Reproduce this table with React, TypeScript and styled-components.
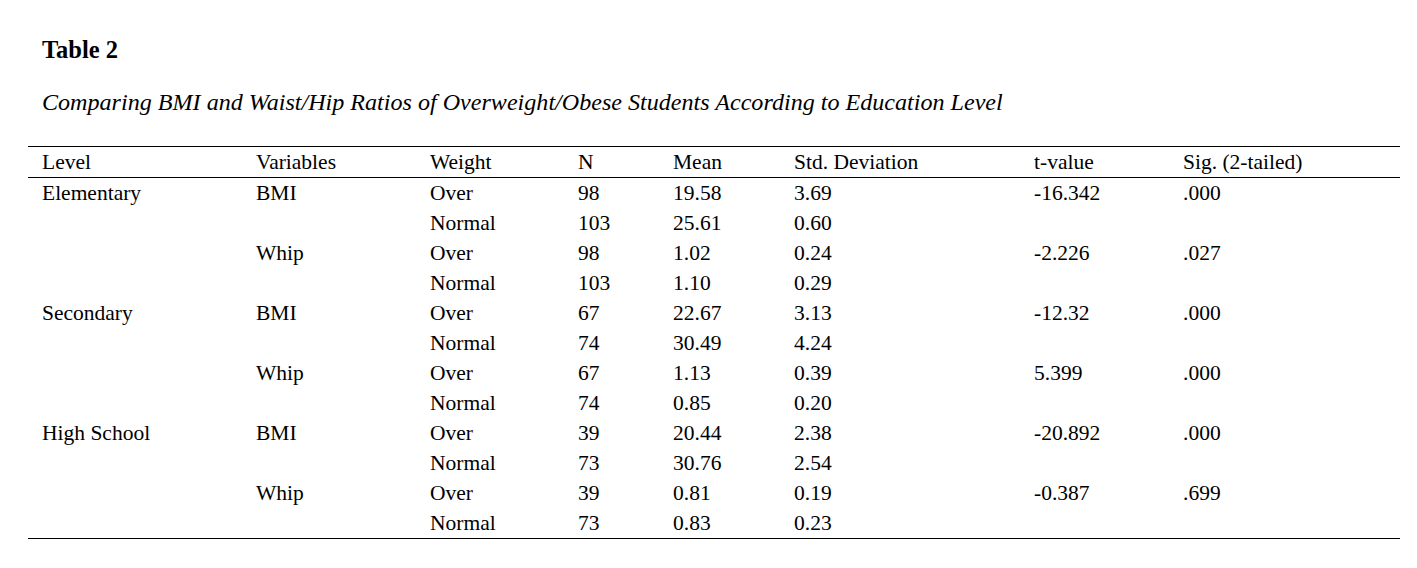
import React from "react";
import styled, { createGlobalStyle } from "styled-components";

const Global = createGlobalStyle`
  html, body { margin: 0; padding: 0; background: #ffffff; }
  body { font-family: "Liberation Serif", "Times New Roman", serif; color: #000; }
`;

const Page = styled.div`
  padding: 35px 17px 0 28px;
  width: 1372px;
`;

const Title = styled.div`
  padding-left: 14px;
  font-size: 24.5px;
  font-weight: bold;
  line-height: 30px;
`;

const Subtitle = styled.div`
  padding-left: 14px;
  margin-top: 22px;
  font-size: 24.1px;
  font-style: italic;
  line-height: 30px;
`;

const Table = styled.div`
  margin-top: 29px;
  border-top: 1px solid #000;
  border-bottom: 1px solid #000;
`;

const cols = "214px 174px 148px 95px 121px 240px 149px 231px";

const Row = styled.div<{ $header?: boolean }>`
  display: grid;
  grid-template-columns: ${cols};
  height: 30px;
  ${(p) => (p.$header ? "border-bottom: 1px solid #000;" : "")}
`;

const Cell = styled.div`
  padding-left: 14px;
  font-size: 21.5px;
  line-height: 30px;
  white-space: nowrap;
`;

const headers = ["Level", "Variables", "Weight", "N", "Mean", "Std. Deviation", "t-value", "Sig. (2-tailed)"];

const rows: string[][] = [
  ["Elementary", "BMI", "Over", "98", "19.58", "3.69", "-16.342", ".000"],
  ["", "", "Normal", "103", "25.61", "0.60", "", ""],
  ["", "Whip", "Over", "98", "1.02", "0.24", "-2.226", ".027"],
  ["", "", "Normal", "103", "1.10", "0.29", "", ""],
  ["Secondary", "BMI", "Over", "67", "22.67", "3.13", "-12.32", ".000"],
  ["", "", "Normal", "74", "30.49", "4.24", "", ""],
  ["", "Whip", "Over", "67", "1.13", "0.39", "5.399", ".000"],
  ["", "", "Normal", "74", "0.85", "0.20", "", ""],
  ["High School", "BMI", "Over", "39", "20.44", "2.38", "-20.892", ".000"],
  ["", "", "Normal", "73", "30.76", "2.54", "", ""],
  ["", "Whip", "Over", "39", "0.81", "0.19", "-0.387", ".699"],
  ["", "", "Normal", "73", "0.83", "0.23", "", ""],
];

export default function App() {
  return (
    <>
      <Global />
      <Page>
        <Title>Table 2</Title>
        <Subtitle>
          Comparing BMI and Waist/Hip Ratios of Overweight/Obese Students According to Education Level
        </Subtitle>
        <Table>
          <Row $header>
            {headers.map((h) => (
              <Cell key={h}>{h}</Cell>
            ))}
          </Row>
          {rows.map((r, i) => (
            <Row key={i}>
              {r.map((c, j) => (
                <Cell key={j}>{c}</Cell>
              ))}
            </Row>
          ))}
        </Table>
      </Page>
    </>
  );
}
